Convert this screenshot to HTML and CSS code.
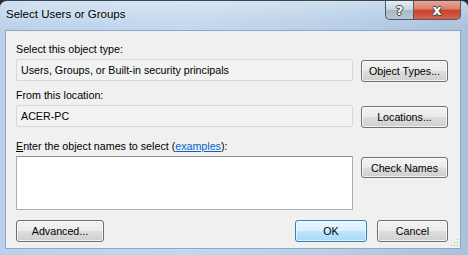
FILE: index.html
```html
<!DOCTYPE html>
<html>
<head>
<meta charset="utf-8">
<link rel="stylesheet" href="styles.css">
</head>
<body>
<div class="window">
  <div class="titlebar">
    <div class="title">Select Users or Groups</div>
    <div class="caption">
      <div class="cap help">?</div>
      <div class="cap close">x</div>
    </div>
  </div>
  <div class="client">
    <div class="label l1">Select this object type:</div>
    <div class="row r1">
      <div class="field">Users, Groups, or Built-in security principals</div>
      <div class="btn b1">Object Types...</div>
    </div>
    <div class="label l2">From this location:</div>
    <div class="row r2">
      <div class="field">ACER-PC</div>
      <div class="btn b2">Locations...</div>
    </div>
    <div class="label l3"><span class="u">E</span>nter the object names to select (<span class="link">examples</span>):</div>
    <div class="row r3">
      <div class="area"></div>
      <div class="btn b3">Check Names</div>
    </div>
    <div class="bottom">
      <div class="btn adv">Advanced...</div>
      <div class="spacer"></div>
      <div class="btn ok">OK</div>
      <div class="btn cancel">Cancel</div>
    </div>
    <svg class="grip" width="8" height="8" viewBox="0 0 8 8">
      <g fill="#b8b8b8">
        <rect x="6" y="0" width="1" height="1"/>
        <rect x="3" y="3" width="1" height="1"/><rect x="6" y="3" width="1" height="1"/>
        <rect x="0" y="6" width="1" height="1"/><rect x="3" y="6" width="1" height="1"/><rect x="6" y="6" width="1" height="1"/>
      </g>
    </svg>
  </div>
</div>
</body>
</html>
```
FILE: styles.css
```css
* { box-sizing: border-box; }
html, body { margin: 0; padding: 0; }
body {
  width: 468px;
  height: 255px;
  overflow: hidden;
  font-family: "Liberation Sans", Arial, sans-serif;
  font-size: 10.7px;
  color: #000;
  background: #2b2b2b;
}
.window {
  width: 468px;
  height: 255px;
  border-top: 1px solid #3a4654;
  border-radius: 7px 7px 0 0;
  background: linear-gradient(90deg, #b9d1ea 0%, #c3d8ee 40%, #b7cfe8 70%, #a9c1db 100%);
  display: flex;
  flex-direction: column;
  overflow: hidden;
}
.titlebar {
  height: 29px;
  display: flex;
  align-items: flex-start;
  background: linear-gradient(180deg, rgba(255,255,255,0.35) 0%, rgba(255,255,255,0.1) 60%, rgba(255,255,255,0) 100%);
}
.title {
  padding: 7px 0 0 6px;
  font-size: 11.5px;
  color: #000;
  flex: 1;
  text-shadow: 0 0 6px rgba(255,255,255,0.8);
}
.caption {
  display: flex;
  margin-right: 7px;
}
.cap {
  height: 19px;
  color: #fff;
  font-weight: bold;
  font-family: "DejaVu Sans", sans-serif;
  display: flex;
  align-items: center;
  justify-content: center;
  border: 1px solid #4b5b6d;
  border-top: none;
  text-shadow: -1px 0 #444, 1px 0 #444, 0 -1px #444, 0 1px #444;
}
.help {
  width: 28px;
  font-size: 13px;
  border-radius: 0 0 0 5px;
  border-right: none;
  background: linear-gradient(180deg, #e6ecf3 0%, #c9d4df 48%, #a9b7c6 52%, #b9c8d6 100%);
}
.close {
  width: 48px;
  font-size: 14px;
  border-radius: 0 0 5px 0;
  background: linear-gradient(180deg, #e9a898 0%, #dc7c68 45%, #c8422c 52%, #d7644c 100%);
}
.client {
  position: relative;
  margin: 0 7px 0 5px;
  height: 219px;
  border: 1px solid #8ea6c1;
  background: #f0f0f0;
  padding: 0 0 0 10px;
}
.label {
  height: 13px;
  line-height: 13px;
  white-space: nowrap;
}
.l1 { margin-top: 12px; }
.l2 { margin-top: 7px; }
.l3 { margin-top: 12px; }
.u { text-decoration: underline; }
.link { color: #0066cc; text-decoration: underline; }
.row {
  display: flex;
  align-items: flex-start;
  gap: 8px;
  margin-top: 3px;
}
.field {
  width: 337px;
  height: 22px;
  border: 1px solid #d8d8d8;
  border-radius: 2px;
  background: #f2f2f2;
  padding: 0 0 0 4px;
  line-height: 20px;
  white-space: nowrap;
}
.area {
  width: 337px;
  height: 54px;
  border: 1px solid #acb0b6;
  border-top-color: #8d9197;
  background: #fff;
}
.btn {
  width: 87px;
  height: 22px;
  border: 1px solid #707070;
  border-radius: 3px;
  background: linear-gradient(180deg, #f3f3f3 0%, #ebebeb 48%, #dddddd 52%, #cfcfcf 100%);
  display: flex;
  align-items: center;
  justify-content: center;
  box-shadow: inset 0 0 0 1px rgba(255,255,255,0.7);
  white-space: nowrap;
}
.b1 { margin-top: 1px; }
.b2 { margin-top: 1px; }
.b3 { margin-top: 1px; height: 21px; }
.bottom {
  display: flex;
  margin-top: 10px;
  width: 432px;
}
.spacer { flex: 1; }
.adv { width: 88px; }
.ok {
  width: 72px;
  border-color: #3c7fb1;
  background: linear-gradient(180deg, #eaf6fd 0%, #d9f0fc 48%, #bee6fd 52%, #a7d9f5 100%);
  box-shadow: inset 0 0 0 1px rgba(255,255,255,0.6);
  margin-right: 10px;
}
.cancel { width: 71px; }
.grip {
  position: absolute;
  right: 1px;
  bottom: 1px;
}
```
